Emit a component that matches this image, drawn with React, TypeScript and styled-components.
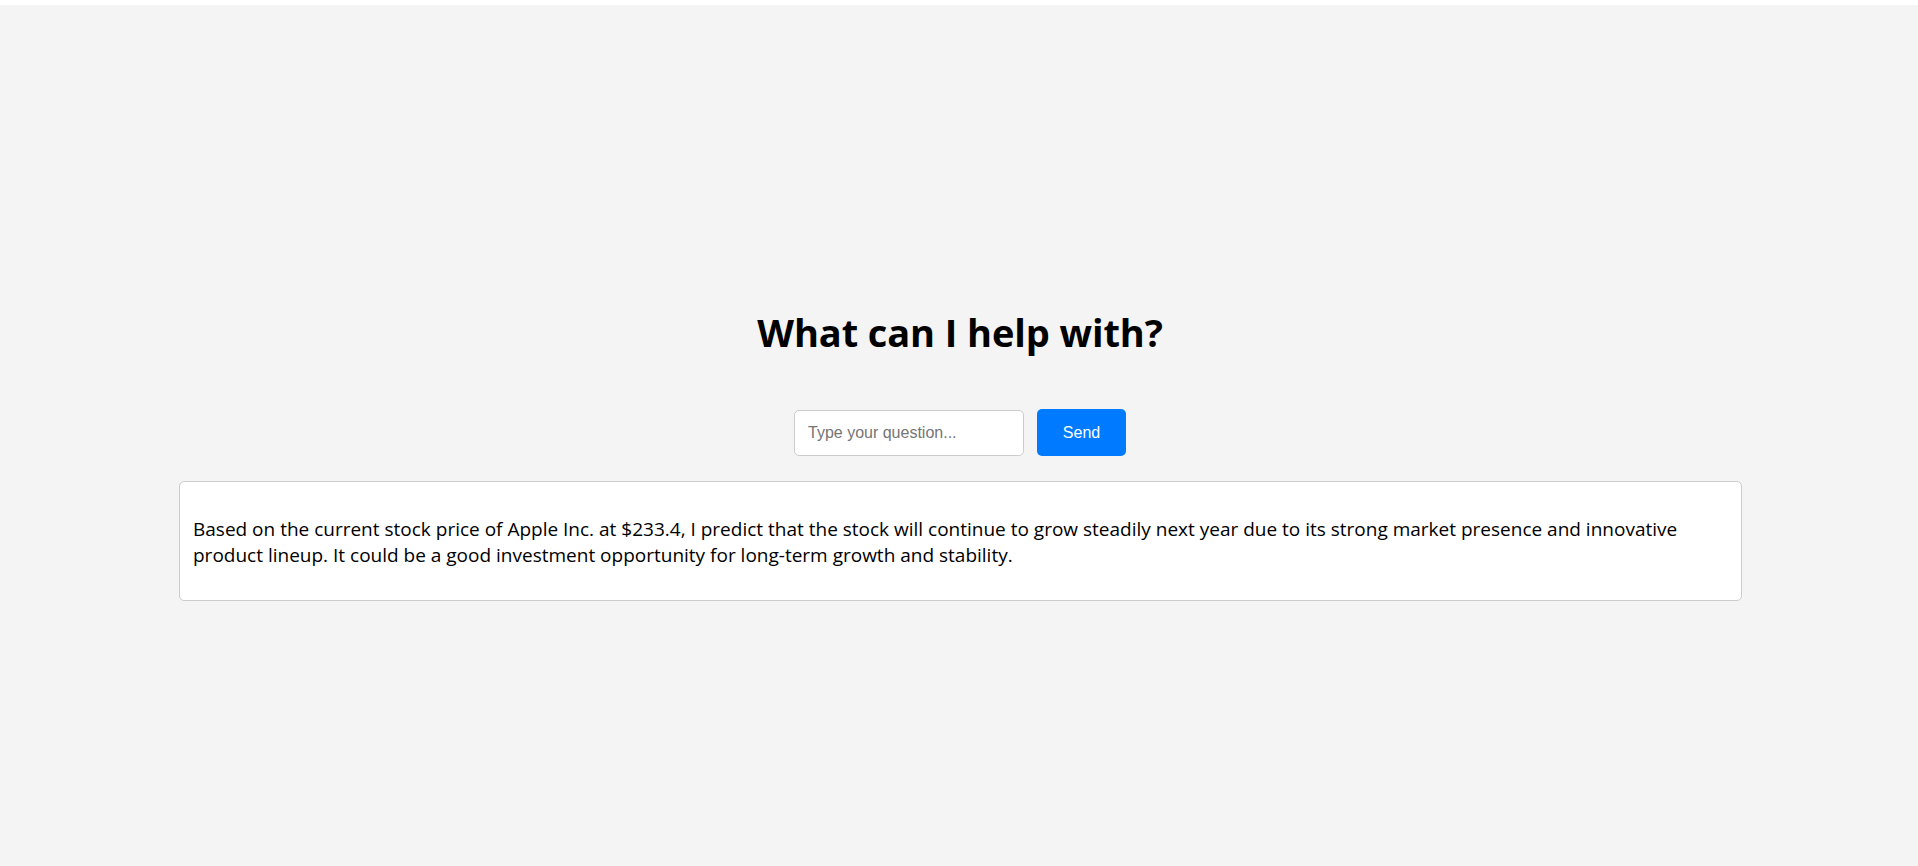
import React, { useState } from 'react';
import styled, { createGlobalStyle } from 'styled-components';

const GlobalStyle = createGlobalStyle`
  html, body {
    margin: 0;
    padding: 0;
    background: #ffffff;
  }
  * {
    box-sizing: border-box;
  }
`;

const Page = styled.div`
  margin-top: 5px;
  min-height: 861px;
  background: #f4f4f4;
  display: flex;
  flex-direction: column;
  align-items: center;
  padding: 303px 176px 0 178px;
  font-family: 'Open Sans', 'Noto Sans', sans-serif;
  color: #000;
`;

const Title = styled.h1`
  margin: 0;
  font-size: 38px;
  line-height: 48px;
  font-weight: 700;
  letter-spacing: -0.1px;
`;

const AskRow = styled.div`
  display: flex;
  align-items: center;
  gap: 13px;
  margin-top: 53px;
`;

const QuestionInput = styled.input`
  width: 230px;
  height: 46px;
  padding: 0 13px;
  border: 1px solid #cccccc;
  border-radius: 5px;
  background: #fff;
  font-family: 'Liberation Sans', Arial, sans-serif;
  font-size: 16px;
  outline: none;
  &::placeholder {
    color: #757575;
  }
`;

const SendButton = styled.button`
  width: 89px;
  height: 47px;
  border: none;
  border-radius: 5px;
  background: #007bff;
  color: #fff;
  font-family: 'Liberation Sans', Arial, sans-serif;
  font-size: 16px;
  cursor: pointer;
`;

const Answer = styled.div`
  align-self: stretch;
  margin: 25px 0 0 1px;
  padding: 34px 13px 32px;
  background: #fff;
  border: 1px solid #cccccc;
  border-radius: 5px;
  font-size: 19px;
  line-height: 26px;
`;

export default function App() {
  const [question, setQuestion] = useState('');
  return (
    <>
      <GlobalStyle />
      <Page>
        <Title>What can I help with?</Title>
        <AskRow>
          <QuestionInput
            placeholder="Type your question..."
            value={question}
            onChange={(e) => setQuestion(e.target.value)}
          />
          <SendButton>Send</SendButton>
        </AskRow>
        <Answer>
          Based on the current stock price of Apple Inc. at $233.4, I predict that the stock will
          continue to grow steadily next year due to its strong market presence and innovative
          product lineup. It could be a good investment opportunity for long-term growth and
          stability.
        </Answer>
      </Page>
    </>
  );
}
